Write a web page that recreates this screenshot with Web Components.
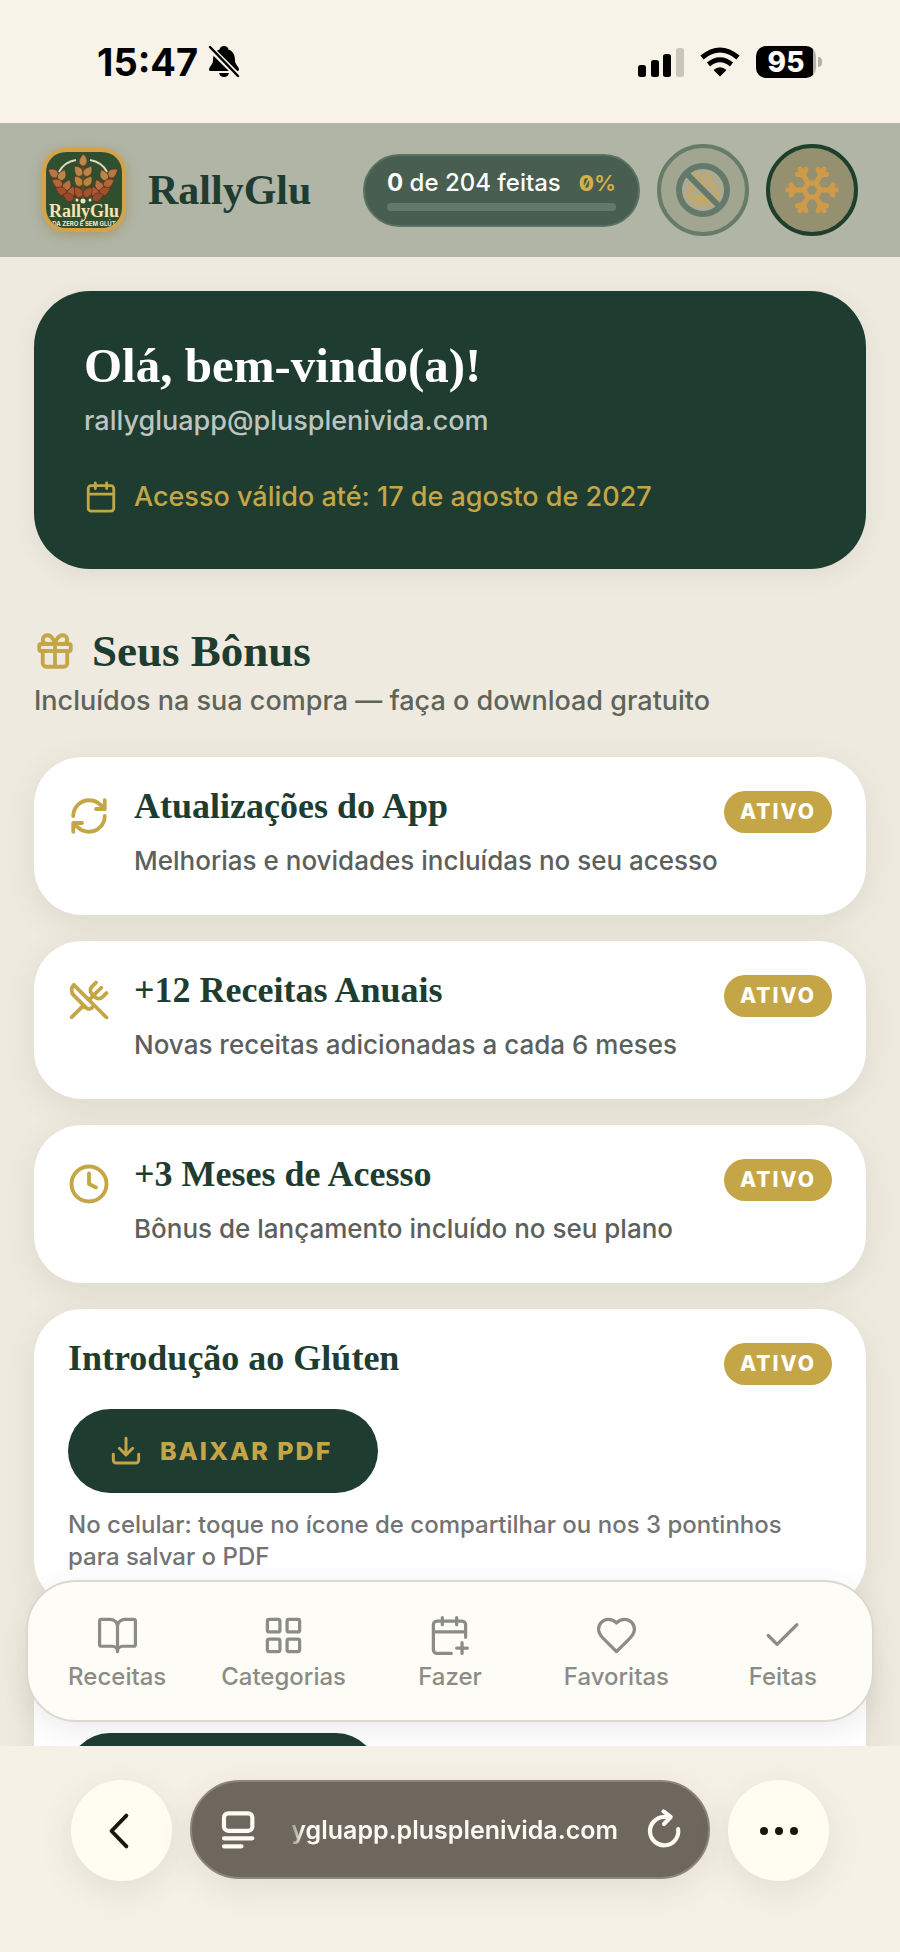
<!DOCTYPE html>
<html lang="pt-BR">
<head>
<meta charset="utf-8">
<meta name="viewport" content="width=device-width, initial-scale=1">
<title>RallyGlu</title>
<style>
  :root {
    --green: #1e3c30;
    --gold: #c5a647;
    --cream: #f7f3e8;
    --page: #efeadf;
    --sans: Inter, "Liberation Sans", sans-serif;
    --serif: "Liberation Serif", serif;
  }
  body {
    margin: 0;
    background: var(--cream);
    font-family: var(--sans);
  }
</style>
</head>
<body>
<rg-app></rg-app>

<script>
const ICONS = {
  calendar: '<rect x="3" y="4" width="18" height="18" rx="2"/><path d="M16 2v4M8 2v4M3 10h18"/>',
  gift: '<rect x="3" y="8" width="18" height="4" rx="1"/><path d="M12 8v13M19 12v7a2 2 0 0 1-2 2H7a2 2 0 0 1-2-2v-7M7.5 8a2.5 2.5 0 0 1 0-5C11 3 12 8 12 8s1-5 4.500-5a2.500 2.500 0 0 1 0 5"/>',
  refresh: '<path d="M3 12a9 9 0 0 1 9-9 9.750 9.750 0 0 1 6.740 2.740L21 8M21 3v5h-5M21 12a9 9 0 0 1-9 9 9.750 9.750 0 0 1-6.740-2.740L3 16M8 16H3v5"/>',
  utensils: '<path d="m16 2-2.300 2.300a3 3 0 0 0 0 4.200l1.800 1.800a3 3 0 0 0 4.200 0L22 8M15 15 3.300 3.300a4.200 4.200 0 0 0 0 6l7.300 7.300c.700.700 2 .700 2.800 0L15 15Zm0 0 7 7M2.100 21.800l6.400-6.300M19 5l-7 7"/>',
  clock: '<circle cx="12" cy="12" r="10"/><path d="M12 6v6l4 2"/>',
  download: '<path d="M12 2.500v12M7 10l5 5 5-5M2.500 14.500V19a2 2 0 0 0 2 2h15a2 2 0 0 0 2-2v-4.500"/>',
  book: '<path d="M12 7v14M3 18a1 1 0 0 1-1-1V4a1 1 0 0 1 1-1h5a4 4 0 0 1 4 4 4 4 0 0 1 4-4h5a1 1 0 0 1 1 1v13a1 1 0 0 1-1 1h-6a3 3 0 0 0-3 3 3 3 0 0 0-3-3z"/>',
  grid: '<rect x="3" y="3" width="7" height="7" rx="1"/><rect x="14" y="3" width="7" height="7" rx="1"/><rect x="14" y="14" width="7" height="7" rx="1"/><rect x="3" y="14" width="7" height="7" rx="1"/>',
  calendarPlus: '<path d="M8 2v4M16 2v4M21 13V6a2 2 0 0 0-2-2H5a2 2 0 0 0-2 2v14a2 2 0 0 0 2 2h8M3 10h18M16 19h6M19 16v6"/>',
  heart: '<path d="M19 14c1.490-1.460 3-3.210 3-5.500A5.500 5.500 0 0 0 16.500 3c-1.760 0-3 .500-4.500 2-1.500-1.500-2.740-2-4.500-2A5.500 5.500 0 0 0 2 8.500c0 2.300 1.500 4.050 3 5.500l7 7Z"/>',
  check: '<path d="M20 6 9 17l-5-5"/>',
  back: '<path d="M14.500 3.200 6 12l8.500 8.800"/>',
  reader: '<rect x="3" y="2" width="17" height="10.500" rx="2.500"/><path d="M3 17h17M3 21.800h10.500"/>',
  reload: '<path d="M20.500 11.500A8.500 8.500 0 1 1 12 4.200h3M11.700 0.800 16 4.200l-4 4.200"/>'
};

class RgIcon extends HTMLElement {
  connectedCallback() {
    const root = this.attachShadow({ mode: 'open' });
    root.innerHTML = `
      <style>
        :host { display: block; flex: none; width: var(--size, 42px); height: var(--size, 42px); }
        svg {
          display: block;
          width: 100%;
          height: 100%;
          overflow: visible;
          fill: none;
          stroke: currentColor;
          stroke-width: var(--stroke, 2.200);
          stroke-linecap: round;
          stroke-linejoin: round;
        }
      </style>
      <svg viewBox="0 0 24 24" aria-hidden="true">${ICONS[this.getAttribute('name')]}</svg>
    `;
  }
}

class RgLogo extends HTMLElement {
  connectedCallback() {
    const leaf = (x, y, angle, color) =>
      `<path d="M0-6Q5-2 4 2T0 6Q-4 5-4 2T0-6Z" transform="translate(${x} ${y}) rotate(${angle})" fill="${color}" stroke="#5c2f17" stroke-width=".6"/>`;
    const side = [
      [11, 25, -55, '#b57745'], [20, 27, 25, '#b98548'],
      [15, 35, -60, '#b0683a'], [25, 37, 25, '#b3723f'],
      [19, 43, -65, '#a3502e'], [29, 44, 20, '#ab5c35'], [26, 49, -65, '#9a4a2c']
    ];
    const stalk = side.map((l) => leaf(...l)).join('');

    this.attachShadow({ mode: 'open' }).innerHTML = `
      <style>
        :host {
          display: block;
          flex: none;
          box-sizing: border-box;
          width: 84px;
          height: 84px;
          border: 4px solid #d5a346;
          border-radius: 24px;
          overflow: hidden;
          box-shadow: 0 3px 12px rgba(150, 120, 50, .45);
        }
        svg { display: block; width: 100%; height: 100%; }
        .name { font: bold 18px var(--serif); fill: #f7e4b0; }
        .tag { font: bold 6px var(--sans); fill: #f3ead0; }
      </style>
      <svg viewBox="4 4 76 76" role="img" aria-label="RallyGlu">
        <rect width="84" height="84" fill="#304f2f"/>
        <path d="M17 24Q22 14 34 12M65 24Q60 14 48 12" fill="none" stroke="#ddd7bd" stroke-width="2"/>
        <path d="M41 14V50M10 24Q18 44 34 51M72 24Q64 44 48 51" fill="none" stroke="#7a4a25" stroke-width="1.500"/>
        ${stalk}
        <g transform="translate(82 0) scale(-1 1)">${stalk}</g>
        ${leaf(41, 12, 0, '#b98a4c')}
        ${leaf(36, 23, -35, '#b8864a')}${leaf(46, 23, 35, '#b8864a')}
        ${leaf(36, 33, -35, '#b7853f')}${leaf(46, 33, 35, '#b7853f')}
        ${leaf(36, 44, -35, '#a6532f')}${leaf(46, 44, 35, '#a6532f')}
        <g fill="#efe3bd"><circle cx="35" cy="52" r="1.500"/><circle cx="41" cy="53" r="2.500"/><circle cx="48" cy="52" r="1.500"/></g>
        <text class="name" x="42" y="69" text-anchor="middle">RallyGlu</text>
        <text class="tag" x="42" y="78" text-anchor="middle">DA ZERO E SEM GLÚT</text>
      </svg>
    `;
  }
}

class RgStatusBar extends HTMLElement {
  connectedCallback() {
    this.attachShadow({ mode: 'open' }).innerHTML = `
      <style>
        :host {
          display: flex;
          align-items: center;
          flex: none;
          box-sizing: border-box;
          height: 123px;
          padding: 0 78px 0 97px;
          background: var(--cream);
          color: #000;
        }
        svg { display: block; }
        .time { font-size: 38px; font-weight: 700; margin-right: 10px; }
        .right { display: flex; align-items: center; gap: 16px; margin-left: auto; }
        .power { display: flex; align-items: center; gap: 2px; }
        .level {
          width: 60px;
          line-height: 32px;
          border-radius: 10px;
          background: linear-gradient(90deg, #000 95%, #b5b1a8 95%);
          color: #fff;
          font-size: 28px;
          font-weight: 800;
          text-align: center;
        }
        .cap { width: 4px; height: 10px; border-radius: 0 4px 4px 0; background: #b5b1a8; }
      </style>
      <span class="time">15:47</span>
      <svg width="32" height="34" viewBox="0 0 32 34" role="img" aria-label="Silencioso">
        <path d="M16 1c2.500 0 4 1.500 4.500 3.500 5 2 6.500 6 6.500 11 0 4 4 6 4 9 0 1.300-1 1.500-2 1.500H3c-1 0-2-.500-2-1.500 0-3 4-5 4-9 0-5 1.500-9 6.500-11C12 2.500 13.500 1 16 1ZM11 28h10c-1 3-2.500 4-5 4s-4-1-5-4Z"/>
        <path d="M0 1 32 33" stroke="#f7f3e8" stroke-width="6"/>
        <path d="M2 2 30 31" stroke="#000" stroke-width="2.500" stroke-linecap="round"/>
      </svg>
      <div class="right">
        <svg width="46" height="30" viewBox="0 0 46 30" role="img" aria-label="Sinal">
          <rect y="18" width="8" height="12" rx="2.500"/><rect x="13" y="13" width="8" height="17" rx="2.500"/>
          <rect x="25" y="7" width="8" height="23" rx="2.500"/><rect x="38" y="1" width="8" height="29" rx="2.500" fill="#c9c5bb"/>
        </svg>
        <svg width="40" height="30" viewBox="0 0 40 30" role="img" aria-label="Wi-Fi">
          <g fill="none" stroke="#000" stroke-width="5"><path d="M2 10.500Q20-4.500 38 10.500M8.500 17.500Q20 8 31.500 17.500"/></g>
          <path d="M13.500 23Q20 17.500 26.500 23L20 29.500Z"/>
        </svg>
        <div class="power"><div class="level">95</div><div class="cap"></div></div>
      </div>
    `;
  }
}

class RgProgress extends HTMLElement {
  connectedCallback() {
    this.attachShadow({ mode: 'open' }).innerHTML = `
      <style>
        :host {
          display: flex;
          flex-direction: column;
          justify-content: center;
          gap: 6px;
          box-sizing: border-box;
          width: 277px;
          height: 73px;
          padding: 0 22px;
          border: 2px solid #5b7262;
          border-radius: 37px;
          background: #485e50;
          color: #fff;
          font-size: 24px;
          line-height: 28px;
          font-weight: 500;
        }
        .row { display: flex; justify-content: space-between; }
        .pct { color: #d3b048; font-size: 22px; font-weight: 600; }
        .pct b { font-weight: 800; font-feature-settings: "zero"; }
        .track { height: 8px; border-radius: 4px; background: #64796b; }
      </style>
      <div class="row"><span><b>0</b> de 204 feitas</span><span class="pct"><b>0</b>%</span></div>
      <div class="track" role="progressbar" aria-valuenow="0" aria-valuemax="204" aria-label="Receitas feitas"></div>
    `;
  }
}

class RgHeader extends HTMLElement {
  connectedCallback() {
    const arms = [0, 60, 120, 180, 240, 300]
      .map((a) => `<path d="M38 30H54M47 30l4-5M47 30l4 5" transform="rotate(${a} 30 30)"/>`)
      .join('');

    this.attachShadow({ mode: 'open' }).innerHTML = `
      <style>
        :host {
          display: flex;
          align-items: center;
          flex: none;
          box-sizing: border-box;
          height: 134px;
          padding: 0 42px;
          background: #b0b5a6;
        }
        h1 {
          margin: 0 auto 0 22px;
          color: var(--green);
          font: bold 42px/50px var(--serif);
        }
        button {
          display: grid;
          place-items: center;
          width: 92px;
          height: 92px;
          margin-left: 17px;
          padding: 0;
          border: 4px solid #667b68;
          border-radius: 50%;
          background: #a2a58f;
        }
        button.active { border-color: #1d3f2c; background: #95906f; }
        svg { display: block; width: 60px; height: 60px; }
      </style>
      <rg-logo></rg-logo>
      <h1>RallyGlu</h1>
      <rg-progress></rg-progress>
      <button type="button" aria-label="Sem glúten">
        <svg viewBox="0 0 60 60">
          <circle cx="30" cy="30" r="22" fill="#abab94"/>
          <g fill="none" stroke="#c4a76b" stroke-width="4">
            <path d="M26 12 14 36M20 26h16M34 12l11 24M30 17v9M30 26v9M14 37h32M19 45q11-8 22 0M30 36v12"/>
          </g>
          <g fill="none" stroke="#65796a" stroke-width="6"><circle cx="30" cy="30" r="24"/><path d="m13 13 34 34"/></g>
        </svg>
      </button>
      <button type="button" class="active" aria-label="Congelável">
        <svg viewBox="0 0 60 60" fill="none" stroke="#cf9b49" stroke-width="5" stroke-linecap="round" stroke-linejoin="round">
          <path d="M38 30 34 37H26L22 30l4-7h8Z"/>${arms}
        </svg>
      </button>
    `;
  }
}

class RgWelcome extends HTMLElement {
  connectedCallback() {
    this.attachShadow({ mode: 'open' }).innerHTML = `
      <style>
        :host {
          display: block;
          padding: 52px 50px;
          border-radius: 56px;
          background: var(--green);
          box-shadow: 0 6px 24px rgba(30, 60, 48, .08);
          font-size: 27px;
          line-height: 40px;
          font-weight: 500;
        }
        h2 { margin: 0 0 12px; color: #fff; font: bold 49px/46px var(--serif); }
        p { margin: 0; color: #bcc5bf; }
        .until { display: flex; align-items: center; gap: 16px; margin-top: 36px; color: var(--gold); }
        rg-icon { --size: 34px; --stroke: 2; }
      </style>
      <h2><slot name="title"></slot></h2>
      <p><slot name="email"></slot></p>
      <div class="until"><rg-icon name="calendar"></rg-icon><slot name="until"></slot></div>
    `;
  }
}

class RgCard extends HTMLElement {
  connectedCallback() {
    const icon = this.getAttribute('icon');
    const heading = this.getAttribute('heading');
    const status = this.getAttribute('status');
    this.attachShadow({ mode: 'open' }).innerHTML = `
      <style>
        :host {
          display: block;
          padding: 34px;
          border-radius: 48px;
          background: #fff;
          box-shadow: 0 8px 32px rgba(60, 80, 50, .1);
        }
        .head { display: flex; align-items: flex-start; gap: 24px; }
        rg-icon { margin-top: 4px; color: var(--gold); }
        .text { flex: 1; min-width: 0; }
        .title { display: flex; justify-content: space-between; height: 30px; }
        :host(:not([icon])) .title { height: 42px; }
        h3 { margin: 0; color: var(--green); font: bold 36px/30px var(--serif); white-space: nowrap; }
        .badge {
          flex: none;
          box-sizing: border-box;
          height: 42px;
          padding: 0 16px;
          border-radius: 21px;
          background: var(--gold);
          color: #fff;
          font-size: 21px;
          line-height: 41px;
          font-weight: 800;
          letter-spacing: 2px;
        }
        ::slotted(p) { margin: 20px 0 0; color: #5c605c; font-size: 26px; line-height: 40px; font-weight: 500; }
      </style>
      <div class="head">
        ${icon ? `<rg-icon name="${icon}"></rg-icon>` : ''}
        <div class="text">
          <div class="title">
            ${heading ? `<h3>${heading}</h3>` : ''}
            ${status ? `<span class="badge">${status}</span>` : ''}
          </div>
          <slot></slot>
        </div>
      </div>
    `;
  }
}

class RgDownload extends HTMLElement {
  connectedCallback() {
    this.attachShadow({ mode: 'open' }).innerHTML = `
      <style>
        :host { display: block; margin-top: 24px; }
        button {
          display: flex;
          align-items: center;
          gap: 18px;
          min-width: 310px;
          height: 84px;
          padding: 0 42px;
          border: 0;
          border-radius: 42px;
          background: var(--green);
          color: var(--gold);
          font: 800 25px/30px var(--sans);
          letter-spacing: 2px;
        }
        rg-icon { --size: 32px; }
        ::slotted(p) { margin: 16px 0 0; color: #737373; font-size: 24px; line-height: 32px; font-weight: 500; }
      </style>
      <button type="button" aria-label="Baixar PDF"><rg-icon name="download"></rg-icon><slot name="label"></slot></button>
      <slot></slot>
    `;
  }
}

class RgTabBar extends HTMLElement {
  connectedCallback() {
    const tabs = [
      ['book', 'Receitas'],
      ['grid', 'Categorias'],
      ['calendarPlus', 'Fazer'],
      ['heart', 'Favoritas'],
      ['check', 'Feitas']
    ];
    this.attachShadow({ mode: 'open' }).innerHTML = `
      <style>
        :host { display: block; }
        nav {
          display: grid;
          grid-template-columns: repeat(5, 1fr);
          padding: 32px 6px 27px;
          border: 2px solid #dbd9cf;
          border-radius: 50px;
          background: #fdfcf6;
          box-shadow: 0 8px 28px rgba(60, 60, 70, .1);
        }
        a {
          display: flex;
          flex-direction: column;
          align-items: center;
          gap: 4px;
          color: #8b8c86;
          font-size: 24px;
          line-height: 32px;
          font-weight: 500;
          text-decoration: none;
        }
        rg-icon { --size: 43px; --stroke: 1.800; }
      </style>
      <nav aria-label="Principal">
        ${tabs.map(([icon, label]) => `<a href="#${label.toLowerCase()}"><rg-icon name="${icon}"></rg-icon>${label}</a>`).join('')}
      </nav>
    `;
  }
}

class RgBrowserBar extends HTMLElement {
  connectedCallback() {
    this.attachShadow({ mode: 'open' }).innerHTML = `
      <style>
        :host {
          display: flex;
          align-items: flex-start;
          gap: 18px;
          flex: none;
          box-sizing: border-box;
          height: 206px;
          padding: 34px 71px 0;
          background: #f5f1e7;
        }
        button { padding: 0; border: 0; font-family: inherit; }
        .round {
          display: grid;
          place-items: center;
          width: 101px;
          height: 101px;
          border-radius: 50%;
          background: #fffdf2;
          color: #18170f;
          box-shadow: 0 10px 36px rgba(60, 55, 40, .1);
        }
        .bar {
          display: flex;
          align-items: center;
          flex: 1;
          min-width: 0;
          box-sizing: border-box;
          height: 99px;
          padding: 0 24px 0 27px;
          border: 2px solid #8b857a;
          border-radius: 50px;
          background: #6e675d;
          color: #fbfaf3;
          box-shadow: 0 10px 36px rgba(60, 55, 40, .1);
        }
        .url {
          display: flex;
          justify-content: flex-end;
          flex: 1;
          overflow: hidden;
          margin: 0 26px 0 28px;
          background: none;
          color: inherit;
          font-size: 25px;
          line-height: 40px;
          font-weight: 600;
          -webkit-mask-image: linear-gradient(90deg, transparent, #000 16px);
          mask-image: linear-gradient(90deg, transparent, #000 16px);
        }
        .tool { background: none; color: inherit; }
        .tool rg-icon { --size: 40px; --stroke: 2.500; }
        .back { --stroke: 2.200; --size: 42px; }
      </style>
      <button type="button" class="round" aria-label="Voltar"><rg-icon class="back" name="back"></rg-icon></button>
      <div class="bar">
        <button type="button" class="tool" aria-label="Opções da página"><rg-icon name="reader"></rg-icon></button>
        <button type="button" class="url">ygluapp.plusplenivida.com</button>
        <button type="button" class="tool" aria-label="Recarregar"><rg-icon name="reload"></rg-icon></button>
      </div>
      <button type="button" class="round" aria-label="Mais">
        <svg width="40" height="10" viewBox="0 0 40 10" fill="currentColor"><circle cx="5" cy="5" r="4"/><circle cx="20" cy="5" r="4"/><circle cx="35" cy="5" r="4"/></svg>
      </button>
    `;
  }
}

class RgApp extends HTMLElement {
  connectedCallback() {
    this.attachShadow({ mode: 'open' }).innerHTML = `
      <style>
        :host { display: flex; flex-direction: column; height: 100vh; }
        .view {
          position: relative;
          flex: 1;
          min-height: 0;
          overflow: hidden;
          background: var(--page);
        }
        main { padding: 34px; }
        .intro { margin: 60px 0 36px; }
        .intro div { display: flex; align-items: center; gap: 16px; color: var(--gold); }
        h2 { margin: 0; color: var(--green); font: bold 45px/44px var(--serif); }
        .intro p { margin: 8px 0 0; color: #5f645b; font-size: 27px; line-height: 40px; font-weight: 500; }
        .list { display: grid; gap: 26px; }
        rg-tab-bar { position: absolute; left: 26px; right: 26px; bottom: 24px; }
      </style>
      <rg-status-bar></rg-status-bar>
      <rg-header></rg-header>
      <div class="view">
        <main>
          <rg-welcome>
            <span slot="title">Olá, bem-vindo(a)!</span>
            <span slot="email">rallygluapp@plusplenivida.com</span>
            <span slot="until">Acesso válido até: 17 de agosto de 2027</span>
          </rg-welcome>
          <section class="intro">
            <div><rg-icon name="gift"></rg-icon><h2>Seus Bônus</h2></div>
            <p>Incluídos na sua compra — faça o download gratuito</p>
          </section>
          <div class="list">
            <rg-card icon="refresh" heading="Atualizações do App" status="ATIVO"><p>Melhorias e novidades incluídas no seu acesso</p></rg-card>
            <rg-card icon="utensils" heading="+12 Receitas Anuais" status="ATIVO"><p>Novas receitas adicionadas a cada 6 meses</p></rg-card>
            <rg-card icon="clock" heading="+3 Meses de Acesso" status="ATIVO"><p>Bônus de lançamento incluído no seu plano</p></rg-card>
            <rg-card heading="Introdução ao Glúten" status="ATIVO">
              <rg-download>
                <span slot="label">BAIXAR PDF</span>
                <p>No celular: toque no ícone de compartilhar ou nos 3 pontinhos para salvar o PDF</p>
              </rg-download>
            </rg-card>
            <rg-card><rg-download></rg-download></rg-card>
          </div>
        </main>
        <rg-tab-bar></rg-tab-bar>
      </div>
      <rg-browser-bar></rg-browser-bar>
    `;
  }
}

customElements.define('rg-icon', RgIcon);
customElements.define('rg-logo', RgLogo);
customElements.define('rg-status-bar', RgStatusBar);
customElements.define('rg-progress', RgProgress);
customElements.define('rg-header', RgHeader);
customElements.define('rg-welcome', RgWelcome);
customElements.define('rg-card', RgCard);
customElements.define('rg-download', RgDownload);
customElements.define('rg-tab-bar', RgTabBar);
customElements.define('rg-browser-bar', RgBrowserBar);
customElements.define('rg-app', RgApp);
</script>
</body>
</html>
